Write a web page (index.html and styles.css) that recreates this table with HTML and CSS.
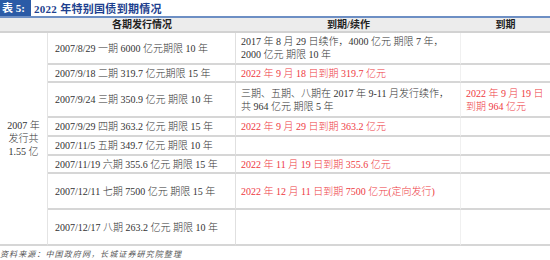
FILE: index.html
```html
<!DOCTYPE html>
<html lang="zh-CN">

<head>
    <meta charset="UTF-8">
    <title>2022 年特别国债到期情况</title>
    <link rel="stylesheet" href="styles.css">
</head>

<body>

    <div class="title">
        <span class="tag">表 5:</span>
        <span class="name">2022 年特别国债到期情况</span>
    </div>

    <table class="bonds">
        <tr class="head">
            <th class="c1"></th>
            <th class="c2">各期发行情况</th>
            <th class="c3">到期/续作</th>
            <th class="c4">到期</th>
        </tr>
        <tr class="h32">
            <td class="c1" rowspan="8">2007 年<br>发行共<br>1.55 亿</td>
            <td class="c2">2007/8/29 一期 6000 亿元期限 10 年</td>
            <td class="c3">2017 年 8 月 29 日续作，4000 亿元 期限 7 年，<br>2000 亿元 期限 10 年</td>
            <td class="c4"></td>
        </tr>
        <tr class="h18">
            <td class="c2">2007/9/18 二期 319.7 亿元期限 15 年</td>
            <td class="c3 red">2022 年 9 月 18 日到期 319.7 亿元</td>
            <td class="c4"></td>
        </tr>
        <tr class="h35">
            <td class="c2">2007/9/24 三期 350.9 亿元 期限 10 年</td>
            <td class="c3">三期、五期、八期在 2017 年 9-11 月发行续作，<br>共 964 亿元 期限 5 年</td>
            <td class="c4 red">2022 年 9 月 19 日<br>到期 964 亿元</td>
        </tr>
        <tr class="h19">
            <td class="c2">2007/9/29 四期 363.2 亿元 期限 15 年</td>
            <td class="c3 red">2022 年 9 月 29 日到期 363.2 亿元</td>
            <td class="c4"></td>
        </tr>
        <tr class="h19">
            <td class="c2">2007/11/5 五期 349.7 亿元 期限 10 年</td>
            <td class="c3"></td>
            <td class="c4"></td>
        </tr>
        <tr class="h18">
            <td class="c2">2007/11/19 六期 355.6 亿元 期限 15 年</td>
            <td class="c3 red">2022 年 11 月 19 日到期 355.6 亿元</td>
            <td class="c4"></td>
        </tr>
        <tr class="h36">
            <td class="c2">2007/12/11 七期 7500 亿元 期限 15 年</td>
            <td class="c3 red">2022 年 12 月 11 日到期 7500 亿元(定向发行)</td>
            <td class="c4"></td>
        </tr>
        <tr class="h36">
            <td class="c2">2007/12/17 八期 263.2 亿元 期限 10 年</td>
            <td class="c3"></td>
            <td class="c4"></td>
        </tr>
    </table>

    <div class="source">资料来源：中国政府网，长城证券研究院整理</div>

</body>

</html>
```

FILE: styles.css
```css
body {
    margin: 0;
    width: 550px;
    font-family: "Liberation Serif", "Noto Sans CJK SC", serif;
    color: #333;
    background: #fff;
}

.title {
    height: 16px;
    display: flex;
    align-items: center;
    font-size: 11px;
    font-weight: bold;
}
.tag {
    background: #2b5ba6;
    color: #fff;
    height: 16px;
    line-height: 16px;
    padding: 0 6px 0 2px;
    margin-right: 3px;
}
.name {
    color: #1d3f8e;
    letter-spacing: 0.3px;
}

.bonds {
    width: 550px;
    table-layout: fixed;
    border-collapse: separate;
    border-spacing: 0;
    font-size: 10px;
    line-height: 13px;
    font-weight: 300;
}
.bonds td,
.bonds th {
    box-sizing: border-box;
    padding: 0;
    vertical-align: middle;
    white-space: nowrap;
}
.bonds .c1 { width: 48px; }
.bonds .c2 { width: 188px; }
.bonds .c3 { width: 225px; }
.bonds .c4 { width: 89px; }

.head th {
    height: 17px;
    background: #ececec;
    border-top: 2px solid #6d8fc4;
    border-bottom: 2px solid #d2d2d2;
    font-weight: bold;
    color: #222;
    text-align: center;
}

.bonds td {
    border-bottom: 2px solid #d6d6d6;
}
.bonds td.c1 {
    text-align: center;
    border-right: 1px solid #e4e4e4;
}
.bonds td.c2 {
    padding-left: 7px;
    border-right: 1px solid #e0e0e0;
}
.bonds td.c3 {
    padding-left: 5px;
    border-right: 1px solid #f0f0f0;
}
.bonds td.c4 {
    padding-left: 5px;
}
.red {
    color: #ee3a3f;
}

.h18 td { height: 18px; }
.h19 td { height: 19px; }
.h32 td { height: 32px; }
.h35 td { height: 35px; }
.h36 td { height: 36px; }

.source {
    margin-top: 3px;
    font-size: 8px;
    font-style: italic;
    color: #555;
    line-height: 12px;
    letter-spacing: 1.1px;
}
```
